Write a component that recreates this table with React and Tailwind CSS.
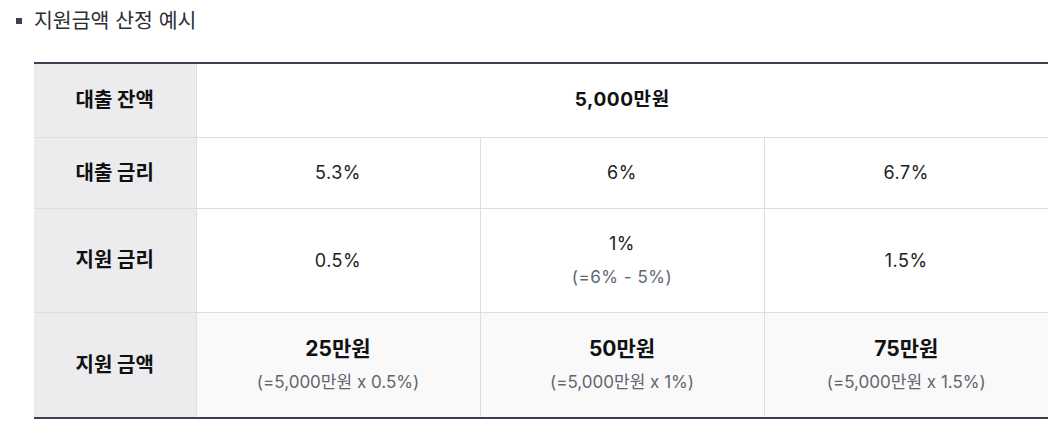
export default function App() {
  const font = { fontFamily: '"Inter", "Noto Sans CJK KR", sans-serif' };
  const th = "bg-[#ececef] border-r border-b border-[#dddddd] text-[20px] font-bold text-[#111] text-center";
  const td = "border-r border-b border-[#dddddd] text-[18px] tracking-[0.03em] text-[#222] text-center";
  const tdLast = "border-b border-[#dddddd] text-[18px] tracking-[0.03em] text-[#222] text-center";
  const sub = "text-[17px] text-[#5f6670] leading-[26px]";
  const amt = "text-[21px] font-bold text-[#111] leading-[28px]";
  return (
    <div className="w-[1062px] h-[443px] bg-white" style={font}>
      <div className="flex items-center pt-[6px] pl-[16px] h-[36px]">
        <span className="w-[6px] h-[6px] bg-[#3b4250] mr-[12px]"></span>
        <span className="text-[20.5px] text-[#2b2f36]">지원금액 산정 예시</span>
      </div>
      <div className="pl-[34px] pt-[26px]">
        <table className="w-[1014px] border-collapse border-t-2 border-t-[#3a4150] border-b-2 border-b-[#3a4150] table-fixed">
          <colgroup>
            <col className="w-[162px]" />
            <col className="w-[284px]" />
            <col className="w-[284px]" />
            <col className="w-[284px]" />
          </colgroup>
          <tbody>
            <tr className="h-[74px]">
              <th className={th}>대출 잔액</th>
              <td colSpan={3} className="border-b border-[#dddddd] text-[19px] tracking-[0.03em] font-bold text-[#111] text-center">5,000만원</td>
            </tr>
            <tr className="h-[71px]">
              <th className={th}>대출 금리</th>
              <td className={td}>5.3%</td>
              <td className={td}>6%</td>
              <td className={tdLast}>6.7%</td>
            </tr>
            <tr className="h-[104px]">
              <th className={th}>지원 금리</th>
              <td className={td}>0.5%</td>
              <td className={td}>
                <div className="leading-[26px]">1%</div>
                <div className={sub + " mt-[7px]"}>(=6% - 5%)</div>
              </td>
              <td className={tdLast}>1.5%</td>
            </tr>
            <tr className="h-[106px]">
              <th className="bg-[#ececef] border-r border-[#dddddd] text-[20px] font-bold text-[#111] text-center">지원 금액</th>
              <td className="bg-[#f9f9f9] border-r border-[#dddddd] text-center">
                <div className={amt}>25만원</div>
                <div className={sub + " mt-[6px]"}>(=5,000만원 x 0.5%)</div>
              </td>
              <td className="bg-[#f9f9f9] border-r border-[#dddddd] text-center">
                <div className={amt}>50만원</div>
                <div className={sub + " mt-[6px]"}>(=5,000만원 x 1%)</div>
              </td>
              <td className="bg-[#f9f9f9] text-center">
                <div className={amt}>75만원</div>
                <div className={sub + " mt-[6px]"}>(=5,000만원 x 1.5%)</div>
              </td>
            </tr>
          </tbody>
        </table>
      </div>
    </div>
  );
}
